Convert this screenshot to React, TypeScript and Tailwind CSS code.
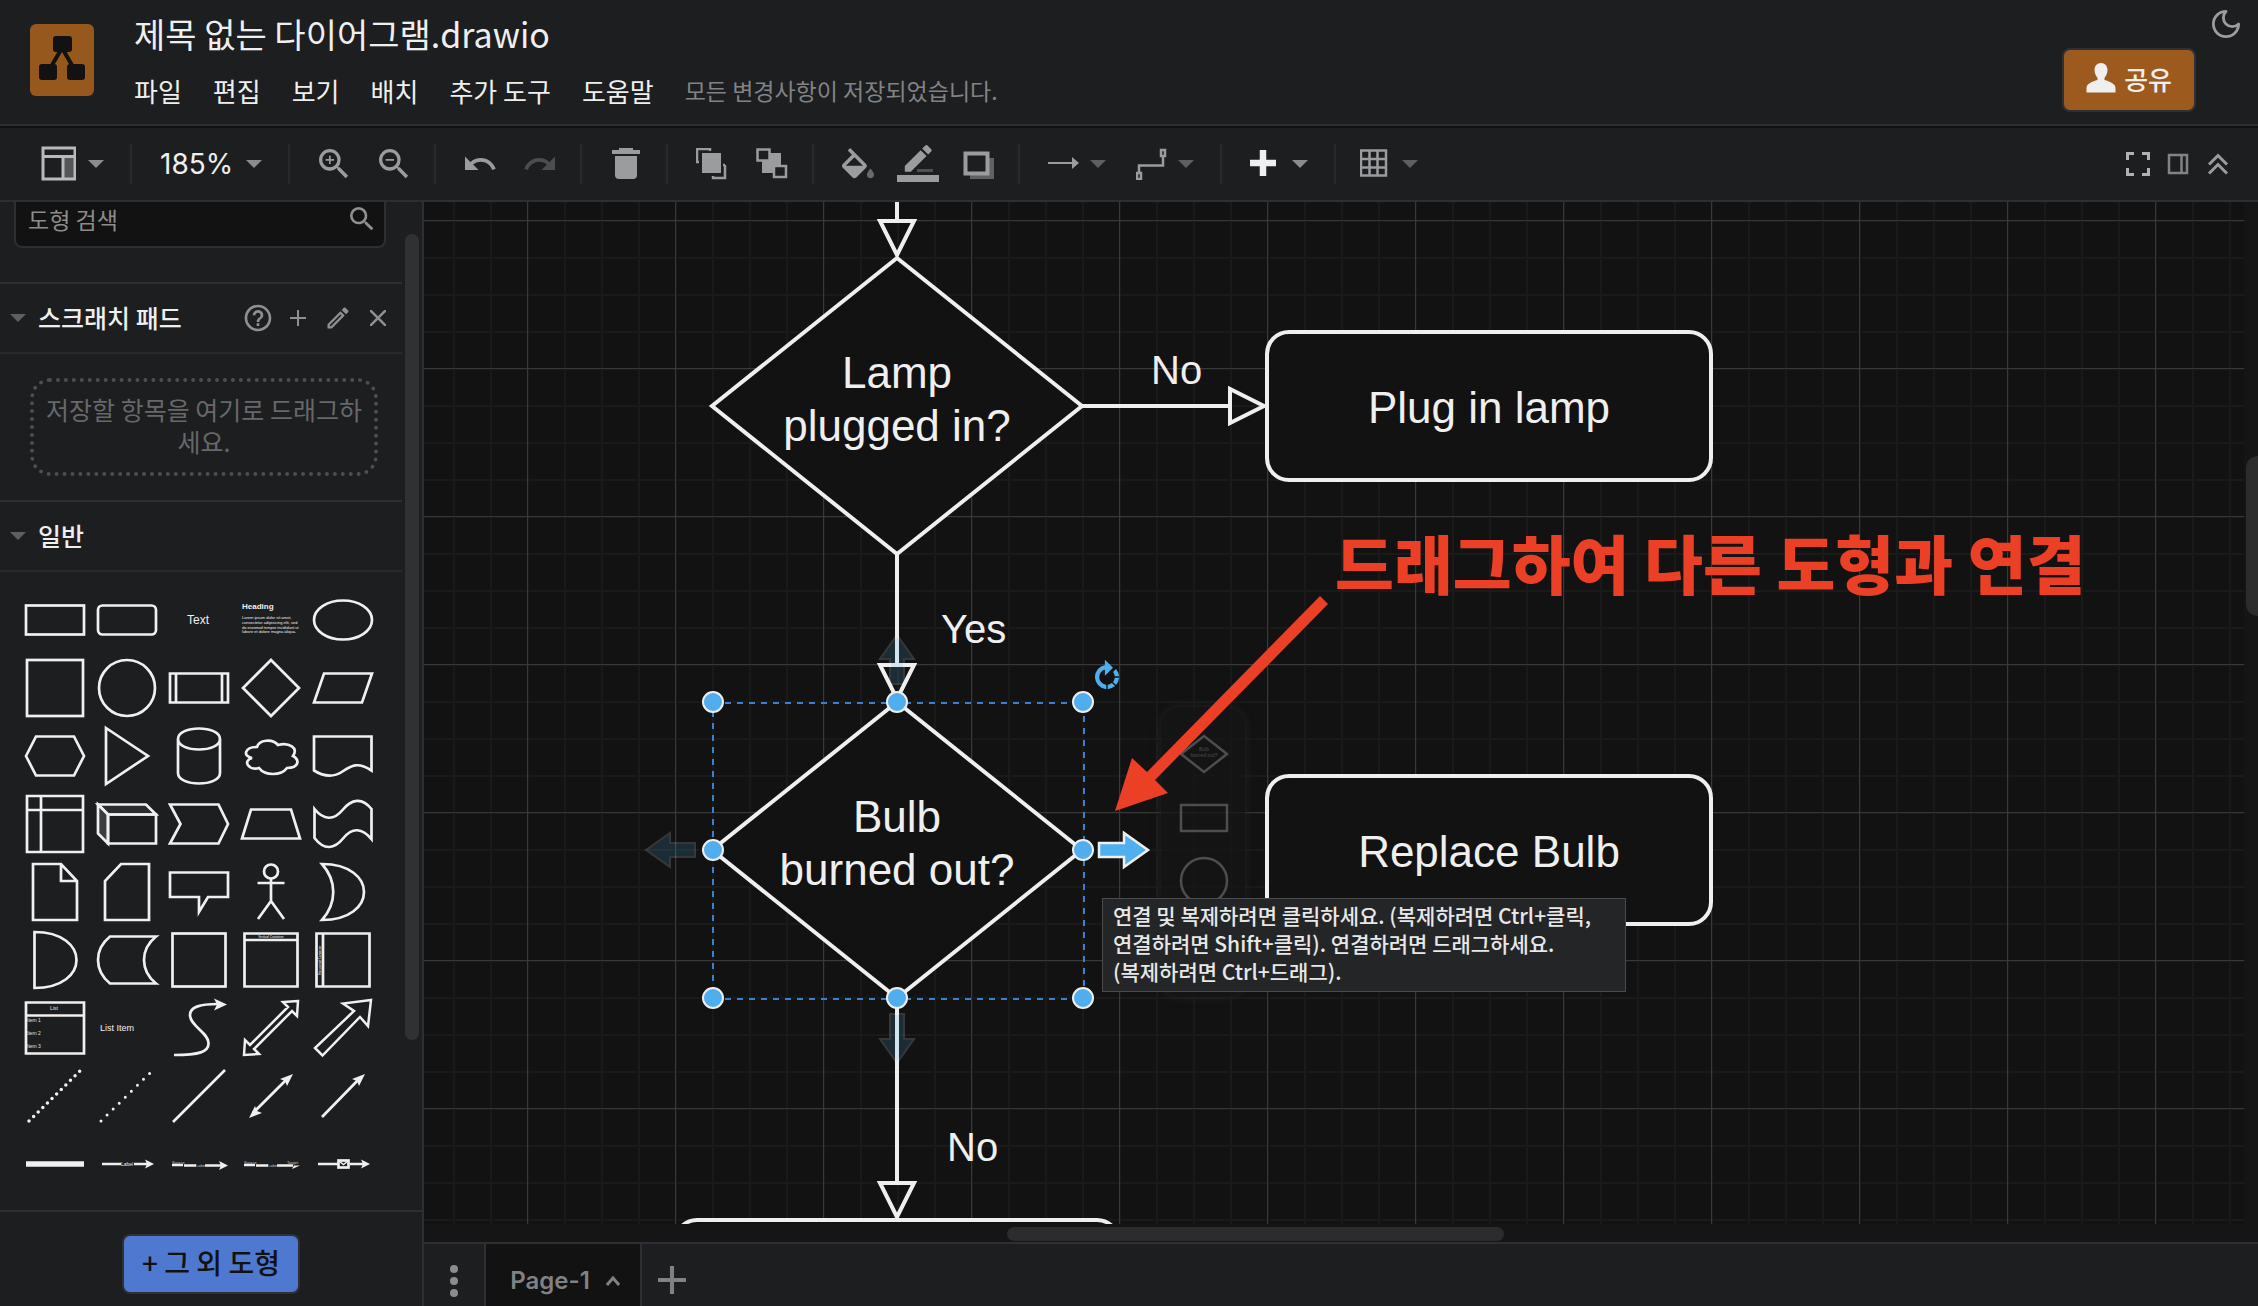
import type { ReactNode } from 'react';
import { MdHelpOutline, MdOutlineEdit, MdRedo, MdRotateRight, MdSearch, MdUndo, MdZoomIn, MdZoomOut } from 'react-icons/md';

const menus = ['파일', '편집', '보기', '배치', '추가 도구', '도움말'];

function Caret({ bright }: { bright?: boolean }) {
  return (
    <svg viewBox="0 0 16 8" className={bright ? 'w-4 h-2 shrink-0 fill-[#8c8c8c]' : 'w-4 h-2 shrink-0 fill-[#5f5f5f]'}>
      <path d="M0 0h16l-8 8z" />
    </svg>
  );
}

function Group({ children }: { children: ReactNode }) {
  return <div className="flex items-center h-10 gap-7 pl-7 pr-6 border-r-2 border-[#292a2d]">{children}</div>;
}

function MenuGroup({ children, last }: { children: ReactNode; last?: boolean }) {
  return (
    <div className={last ? 'flex items-center h-10 pl-6' : 'flex items-center h-10 gap-[30px] pl-7 pr-[26px] border-r-2 border-[#292a2d]'}>
      {children}
    </div>
  );
}

function Tool({ label, children, menu, bright }: { label: string; children: ReactNode; menu?: boolean; bright?: boolean }) {
  return (
    <button aria-label={label} className="flex items-center gap-2.5 h-8 text-[#9b9c9e]">
      <span className="flex items-center justify-center size-8">{children}</span>
      {menu && <Caret bright={bright} />}
    </button>
  );
}

function Header() {
  return (
    <header className="flex h-32 shrink-0 border-b-2 border-[#101011]">
      <div className="flex flex-1 pl-[30px] border-b-2 border-[#2e2f32]">
        <svg viewBox="0 0 64 72" className="w-16 h-[72px] mt-6 shrink-0">
          <rect width="64" height="72" rx="6" fill="#96581d" />
          <path d="M32 24 18 48M32 24l14 24" stroke="#121212" strokeWidth="4" />
          <g fill="#121212">
            <rect x="23" y="12" width="19" height="16" rx="3" />
            <rect x="9" y="40" width="18" height="16" rx="3" />
            <rect x="37" y="40" width="18" height="16" rx="3" />
          </g>
        </svg>
        <div className="pl-10 pt-3">
          <h1 className="text-[34px] leading-11">제목 없는 다이어그램.drawio</h1>
          <nav className="flex items-center gap-[31px] mt-3.5 h-10 text-[26px]">
            {menus.map((m) => <button key={m}>{m}</button>)}
            <span className="text-[23px] text-[#828385]">모든 변경사항이 저장되었습니다.</span>
          </nav>
        </div>
        <div className="flex flex-col items-end ml-auto pt-2.5">
          <button aria-label="테마" className="mr-[18px]">
            <svg viewBox="2 2 20 20" className="size-7" fill="none" stroke="#9b9c9e" strokeWidth="2" strokeLinejoin="round">
              <path d="M12 3a6 6 0 0 0 9 9 9 9 0 1 1-9-9Z" />
            </svg>
          </button>
          <button className="flex items-center gap-2 h-16 mt-2.5 mr-[62px] px-[22px] pb-1 rounded-lg border-2 border-[#2e3035] bg-[#9c5a1f] text-[26px] font-medium">
            <svg viewBox="0 0 30 30" className="size-[30px]" fill="#efefef">
              <path d="M15 0c4 0 6.500 3 6.500 7 0 3-1.500 6-3 8v2c5 1.500 11 3.500 11 8v4.500h-29V25c0-4.500 6-6.500 11-8v-2c-1.500-2-3-5-3-8 0-4 2.500-7 6.500-7z" />
            </svg>
            공유
          </button>
        </div>
      </div>
    </header>
  );
}

function Toolbar() {
  return (
    <div className="flex items-center h-[74px] shrink-0 border-b-2 border-[#2e2f33]">
      <div className="flex items-center h-10 pl-10 pr-[26px] border-r-2 border-[#292a2d]">
        <button aria-label="레이아웃" className="flex items-center gap-3">
          <svg viewBox="0 0 36 36" className="size-9" fill="none" stroke="#b9babc" strokeWidth="3">
            <path d="M23 11h12v23H23z" fill="#555658" stroke="none" />
            <path d="M3 2h32v31H3zM3 10.500h32M23 10.500V33" />
          </svg>
          <Caret bright />
        </button>
      </div>
      <div className="flex items-center h-10 pl-7 pr-[26px] border-r-2 border-[#292a2d]">
        <button className="flex items-center gap-3.5 font-['Inter'] text-[28px]">
          <span className="w-[72px]">185%</span>
          <Caret bright />
        </button>
      </div>
      <Group>
        <Tool label="확대"><MdZoomIn className="size-10 shrink-0" /></Tool>
        <Tool label="축소"><MdZoomOut className="size-10 shrink-0" /></Tool>
      </Group>
      <Group>
        <Tool label="실행 취소"><MdUndo className="size-9 shrink-0" /></Tool>
        <Tool label="다시 실행"><MdRedo className="size-9 shrink-0 text-[#4c4d4f]" /></Tool>
      </Group>
      <Group>
        <Tool label="삭제">
          <svg viewBox="0 0 32 32" className="size-8" fill="currentColor">
            <path d="M9 0h14v2h7v4H2V2h7zM5 8h22v19a4 4 0 0 1-4 4H9a4 4 0 0 1-4-4z" />
          </svg>
        </Tool>
      </Group>
      <Group>
        <Tool label="맨 앞으로">
          <svg viewBox="0 0 32 32" className="size-8" fill="none" stroke="currentColor" strokeWidth="2.500">
            <rect x="6" y="5" width="19" height="20" fill="currentColor" stroke="none" />
            <path d="M3 14H1V1h13v2M29 17v13H17v-2M29 17h-2" />
          </svg>
        </Tool>
        <Tool label="맨 뒤로">
          <svg viewBox="0 0 32 32" className="size-8" fill="none" stroke="currentColor" strokeWidth="2.500">
            <rect x="6" y="5" width="19" height="20" fill="currentColor" stroke="none" />
            <rect x="1.500" y="1.500" width="12" height="11" fill="#1d1e20" />
            <rect x="18" y="18" width="12" height="11" fill="#1d1e20" />
          </svg>
        </Tool>
      </Group>
      <Group>
        <Tool label="채우기 색">
          <svg viewBox="3 0 18 18" className="size-8" fill="currentColor">
            <path d="M16.56 8.94L7.62 0 6.21 1.41l2.38 2.38-5.150 5.150c-.59.59-.59 1.540 0 2.120l5.500 5.500c.29.29.68.44 1.060.44s.77-.15 1.060-.44l5.500-5.500c.59-.58.59-1.530 0-2.120zM5.210 10L10 5.210 14.790 10H5.210z" />
            <path d="M19 11.500s-2 2.170-2 3.500c0 1.100.9 2 2 2s2-.9 2-2c0-1.330-2-3.500-2-3.500z" opacity=".6" />
          </svg>
        </Tool>
        <Tool label="선 색">
          <svg viewBox="0 0 42 38" className="w-[42px] h-[38px] shrink-0" fill="currentColor">
            <path d="M0 30h42v7H0z" />
            <path d="M20 24h16v3H20z" opacity=".4" />
            <g transform="translate(1.500 0) scale(1.580)">
              <path d="M17.750 7L14 3.250l-10 10V17h3.750l10-10zm2.960-2.960c.39-.39.39-1.020 0-1.410L18.370.29c-.39-.39-1.020-.39-1.410 0L15 2.250 18.750 6l1.960-1.960z" />
            </g>
          </svg>
        </Tool>
        <Tool label="그림자">
          <svg viewBox="0 0 32 32" className="size-8" fill="none" stroke="currentColor">
            <path d="M8 10h24v21H8z" fill="#606163" stroke="none" />
            <rect x="3.500" y="5.500" width="22" height="20" strokeWidth="4" fill="#1d1e20" />
          </svg>
        </Tool>
      </Group>
      <MenuGroup>
        <Tool label="연결" menu>
          <svg viewBox="0 0 32 32" className="size-8" fill="currentColor">
            <path d="M0 14h24V9l7 6-7 6v-5H0z" />
          </svg>
        </Tool>
        <Tool label="웨이포인트" menu>
          <svg viewBox="0 0 32 32" className="size-8" fill="none" stroke="currentColor" strokeWidth="2.500">
            <path d="M3 25V17.500h24V8" />
            <rect x="1" y="25" width="4" height="6" />
            <rect x="25" y="2" width="4" height="6" />
          </svg>
        </Tool>
      </MenuGroup>
      <MenuGroup>
        <Tool label="삽입" menu bright>
          <svg viewBox="0 0 32 32" className="size-8" stroke="#efefef" strokeWidth="6.500">
            <path d="M0 15h26M13 2v26" />
          </svg>
        </Tool>
      </MenuGroup>
      <MenuGroup last>
        <Tool label="표" menu>
          <svg viewBox="0 0 32 32" className="size-8" fill="none" stroke="currentColor" strokeWidth="2.500">
            <path d="M1 2.500h25v25H1zM9.500 2v26M17.500 2v26M1 11h25M1 19.500h25" />
          </svg>
        </Tool>
      </MenuGroup>
      <div className="flex items-center gap-4 ml-auto pr-7 text-[#9b9c9e]">
        <button aria-label="전체 화면">
          <svg viewBox="0 0 24 24" className="size-6" fill="none" stroke="#b0b1b3" strokeWidth="3">
            <path d="M1.500 8V1.500H8M16 1.500h6.500V8M22.500 16v6.500H16M8 22.500H1.500V16" />
          </svg>
        </button>
        <button aria-label="서식">
          <svg viewBox="0 0 24 24" className="size-6" fill="none" stroke="#828385" strokeWidth="2.500">
            <path d="M3 3h18v18H3zM15.500 3v18" />
          </svg>
        </button>
        <button aria-label="접기">
          <svg viewBox="0 0 24 24" className="size-6" fill="none" stroke="currentColor" strokeWidth="3">
            <path d="m3 12.500 9-9 9 9M3 21.500l9-9 9 9" />
          </svg>
        </button>
      </div>
    </div>
  );
}

// every shape is drawn around the centre of its 72x68 cell
const shapes: { name: string; art: ReactNode }[] = [
  { name: 'Rectangle', art: <rect x="-29" y="-14.500" width="58" height="29" /> },
  { name: 'Rounded Rectangle', art: <rect x="-29" y="-14.500" width="58" height="29" rx="4.500" /> },
  { name: 'Text', art: <text x="-1" y="4" textAnchor="middle" className="text-[12px] fill-[#f0f0f0] stroke-none">Text</text> },
  {
    name: 'Heading',
    art: (
      <g className="fill-[#f0f0f0] stroke-none text-[4px]">
        <text x="-29" y="-11" className="text-[8px] font-bold">Heading</text>
        <text x="-29" y="-1">Lorem ipsum dolor sit amet,</text>
        <text x="-29" y="4">consectetur adipisicing elit, sed</text>
        <text x="-29" y="9">do eiusmod tempor incididunt ut</text>
        <text x="-29" y="13">labore et dolore magna aliqua.</text>
      </g>
    ),
  },
  { name: 'Ellipse', art: <ellipse rx="29" ry="19.500" /> },
  { name: 'Square', art: <rect x="-28" y="-28" width="56" height="56" /> },
  { name: 'Circle', art: <circle r="28" /> },
  { name: 'Process', art: <path d="M-29-14.500h58v29h-58zM-23-14.500v29M23-14.500v29" /> },
  { name: 'Diamond', art: <path d="M0-28 28 0 0 28-28 0z" /> },
  { name: 'Parallelogram', art: <path d="M-29 14.500-19-14.500h48l-10 29z" /> },
  { name: 'Hexagon', art: <path d="M-29 0l10-19.500h38L29 0 19 19.500h-38z" /> },
  { name: 'Triangle', art: <path d="M-21-28 21 0l-42 28z" /> },
  { name: 'Cylinder', art: <path d="M-21-17c0-14 42-14 42 0v34c0 14-42 14-42 0zc0 14 42 14 42 0" /> },
  { name: 'Cloud', art: <path d="M-14-9c-12 0-15 9-5 11-10 3-3 13 7 10 6 8 22 8 28 0 12 0 13-8 6-12 6-8-4-14-15-11-6-7-19-5-21 2z" /> },
  { name: 'Document', art: <path d="M-29-19.500h57.500v34c-14-9-20-5-29 1s-19 5-28.500-1z" /> },
  { name: 'Internal Storage', art: <path d="M-28-28h56v56h-56zM-14-28v56M-28-14h56" /> },
  {
    name: 'Cube',
    art: (
      <>
        <path d="M-29-19.500h48l10 10h-48z" fill="#2b2c2d" />
        <path d="M-29-19.500l10 10v29l-10-10z" fill="#3c3d3e" />
        <path d="M-19-9.500h48v29h-48z" />
      </>
    ),
  },
  { name: 'Step', art: <path d="M-29-19.500h48.500L29 0l-9.500 19.500H-29L-18.500 0z" /> },
  { name: 'Trapezoid', art: <path d="M-29 14.500l9-29h40l9 29z" /> },
  { name: 'Tape', art: <path d="M-28.500-15c9 11 19 12 28 1S19-27 28.500-15v30c-9.500-11-19-12-28-1s-19 13-29 0z" /> },
  { name: 'Note', art: <path d="M-22-28H6l16 17v39h-44zM6-28v17h16" /> },
  { name: 'Card', art: <path d="M-6-28h28v56h-44v-39z" /> },
  { name: 'Callout', art: <path d="M-29-19.500h58V5H9L0 20V5h-29z" /> },
  { name: 'Actor', art: <><circle cy="-20.500" r="7" /><path d="M0-13V9M-13.500-9h27M-13 27 0 9l13 18" /></> },
  { name: 'Or', art: <path d="M-21-28C35-28 35 28-21 28c15-17 15-39 0-56z" /> },
  { name: 'And', art: <path d="M-20.500-28c56 0 56 56 0 56z" /> },
  { name: 'Data Storage', art: <path d="M-17-23.500h46c-16 13-16 34 0 47h-46c-16-13-16-34 0-47z" /> },
  { name: 'Container', art: <rect x="-26.500" y="-26.500" width="53" height="53" /> },
  {
    name: 'Vertical Container',
    art: (
      <>
        <path d="M-26.500-26.500h53v53h-53zM-26.500-20h53" />
        <text y="-22" textAnchor="middle" className="text-[3px] font-bold fill-[#d0d0d0] stroke-none">Vertical Container</text>
      </>
    ),
  },
  {
    name: 'Horizontal Container',
    art: (
      <>
        <path d="M-26.500-26.500h53v53h-53zM-20-26.500v53" />
        <text y="-22" textAnchor="middle" transform="rotate(-90)" className="text-[3px] font-bold fill-[#d0d0d0] stroke-none">Horizontal Container</text>
      </>
    ),
  },
  {
    name: 'List',
    art: (
      <>
        <path d="M-29-25.500h58v51h-58zM-29-12.500h58" />
        <g className="fill-[#e0e0e0] stroke-none text-[5px]">
          <text x="-1" y="-18" textAnchor="middle">List</text>
          <text x="-28" y="-6">Item 1</text>
          <text x="-28" y="7">Item 2</text>
          <text x="-28" y="20">Item 3</text>
        </g>
      </>
    ),
  },
  { name: 'List Item', art: <text x="-27" y="3" className="text-[9px] fill-[#f0f0f0] stroke-none">List Item</text> },
  {
    name: 'Curve',
    art: (
      <>
        <path d="M-25 27C0 27 10 24 9.500 15 9 4-9-2-9-13c0-8 9-11 28-11" />
        <path d="M28-23.500l-13 6 3-6-3-6z" className="fill-[#f0f0f0] stroke-none" />
      </>
    ),
  },
  { name: 'Bidirectional Arrow', art: <path d="M27-27 12-26l5 5-38 38-5-5-1 15 15-1-5-5 38-38 5 5z" strokeWidth="2.500" /> },
  { name: 'Arrow', art: <path d="M28-28 0-24.500 11-17l-39 37 7.500 7.500L17-11 25-2z" strokeWidth="2.500" /> },
  { name: 'Dashed Line', art: <path d="M-26 25 25-25" strokeWidth="3.500" strokeLinecap="round" strokeDasharray="0 6.450" /> },
  { name: 'Dotted Line', art: <path d="M-26 25 23-23" strokeWidth="3" strokeLinecap="round" strokeDasharray="0 8.500" /> },
  { name: 'Line', art: <path d="M-26 26 26-26" /> },
  {
    name: 'Bidirectional Connector',
    art: (
      <>
        <path d="M-18 17 17-18" />
        <path d="M22-22 16-10l-2-5-5-2zM-22 22l6-12 2 5 5 2z" className="fill-[#f0f0f0] stroke-none" />
      </>
    ),
  },
  {
    name: 'Directional Connector',
    art: (
      <>
        <path d="M-21 21 17-18" />
        <path d="M22-22 16-10l-2-5-5-2z" className="fill-[#f0f0f0] stroke-none" />
      </>
    ),
  },
  { name: 'Link', art: <path d="M-29 0h58" strokeWidth="5.500" /> },
  {
    name: 'Connector with Label',
    art: (
      <>
        <path d="M-25 0h19M7 0h14" />
        <path d="M27 0 18 4.500 20 0l-2-4.500z" className="fill-[#f0f0f0] stroke-none" />
        <text x="0" y="2" textAnchor="middle" className="text-[5px] fill-[#f0f0f0] stroke-none">Label</text>
      </>
    ),
  },
  {
    name: 'Connector with 2 Labels',
    art: (
      <>
        <path d="M-27 1h11M-15 1.500h12M6 1.500h16" />
        <path d="M29 1.500 20 6l2-4.500L20-3z" className="fill-[#f0f0f0] stroke-none" />
        <g className="text-[4px] fill-[#c8c8c8] stroke-none"><text x="-27" y="0">Source</text><text x="-3" y="3">Label</text></g>
      </>
    ),
  },
  {
    name: 'Connector with 3 Labels',
    art: (
      <>
        <path d="M-27 1h11M-15 1.500h12M6 1.500h16" />
        <path d="M29 1.500 21 5l2-3.500z" className="fill-[#f0f0f0] stroke-none" />
        <g className="text-[4px] fill-[#c8c8c8] stroke-none"><text x="-27" y="0">Source</text><text x="-3" y="3">Label</text><text x="16" y="0">Target</text></g>
      </>
    ),
  },
  {
    name: 'Connector with Symbol',
    art: (
      <>
        <path d="M-25 0h20M7 0h14" />
        <path d="M27 0 18 4.500 20 0l-2-4.500z" className="fill-[#f0f0f0] stroke-none" />
        <rect x="-4.500" y="-3.500" width="10" height="7" />
        <path d="M-4-3 .5.500 5-3" strokeWidth="1.500" />
      </>
    ),
  },
];

function SectionTitle({ title, children }: { title: string; children?: ReactNode }) {
  return (
    <div className="flex items-center h-[70px] pl-2.5 pr-2 border-b-2 border-[#28292b]">
      <Caret />
      <h2 className="pl-3 text-[25px] font-medium">{title}</h2>
      <div className="flex items-center gap-2 ml-auto text-[#8f9092]">{children}</div>
    </div>
  );
}

function Sidebar() {
  return (
    <aside className="flex flex-col w-[424px] shrink-0 border-r-2 border-[#2e2f32]">
      <div className="flex flex-1 min-h-0 border-b-2 border-[#2e2f32]">
        <div className="w-[402px] overflow-hidden">
          <label className="flex items-center h-[46px] mx-3.5 mr-4 pl-3 pr-1.5 pb-2.5 rounded-b-lg border-2 border-t-0 border-[#2e2f32] bg-[#121212]">
            <input placeholder="도형 검색" aria-label="도형 검색" className="flex-1 min-w-0 bg-transparent text-[23px] outline-none placeholder:text-[#8c8c8c]" />
            <MdSearch className="size-8 text-[#8f9092]" />
          </label>
          <div className="mt-[34px] border-t-2 border-[#2e2f32]">
            <SectionTitle title="스크래치 패드">
              <button aria-label="도움말"><MdHelpOutline className="size-8" /></button>
              <button aria-label="추가" className="flex justify-center w-8">
                <svg viewBox="0 0 16 16" className="size-4" stroke="currentColor" strokeWidth="2"><path d="M0 8h16M8 0v16" /></svg>
              </button>
              <button aria-label="편집" className="flex justify-center w-8"><MdOutlineEdit className="size-7" /></button>
              <button aria-label="닫기" className="flex justify-center w-8">
                <svg viewBox="0 0 16 16" className="size-4" stroke="currentColor" strokeWidth="2.500"><path d="m0 0 16 16M16 0 0 16" /></svg>
              </button>
            </SectionTitle>
            <div className="px-[30px] py-6">
              <div className="flex items-center h-[98px] -mr-1.5 rounded-[20px] border-4 border-dotted border-[#4d4e50] px-2 pb-1 text-center text-[25px] leading-8 text-[#67686a] break-all">
                저장할 항목을 여기로 드래그하세요.
              </div>
            </div>
          </div>
          <div className="border-t-2 border-[#2e2f32]">
            <SectionTitle title="일반" />
            <div className="grid grid-cols-[repeat(5,72px)] pl-[19px] pt-3.5">
              {shapes.map((s) => (
                <button key={s.name} aria-label={s.name} className="h-[68px]">
                  <svg viewBox="-36 -34 72 68" className="w-[72px] h-[68px] font-['Liberation_Sans']" fill="none" stroke="#f0f0f0" strokeWidth="2.700">
                    {s.art}
                  </svg>
                </button>
              ))}
            </div>
          </div>
        </div>
        <div className="w-3.5 h-[806px] mt-8 ml-[3px] rounded-full bg-[#303133]" />
      </div>
      <div className="flex justify-center h-[94px] pt-[22px] pb-3">
        <button className="px-[18px] pb-1 rounded-lg border-2 border-[#2e3035] bg-[#4f79d0] text-[28px] font-medium text-[#121212]">+ 그 외 도형</button>
      </div>
    </aside>
  );
}

function DiagramLines() {
  return (
    <svg className="absolute inset-0 size-full" fill="none" stroke="#efefef" strokeWidth="4">
      <g fill="#121212">
        <path d="M473 56l185 148-185 148-185-148z" />
        <path d="M473 500l185 148-185 148-185-148z" />
        <rect x="843" y="130" width="444" height="148" rx="22" />
        <rect x="843" y="574" width="444" height="148" rx="22" />
        <rect x="251" y="1018" width="444" height="148" rx="22" />
      </g>
      <path d="M473 0v19M456 19h34l-17 34z" />
      <path d="M473 352v111M456 463h34l-17 34z" />
      <path d="M658 204h148M806 187v34l34-17z" />
      <path d="M473 796v185M456 981h34l-17 34z" />
    </svg>
  );
}

const handles = [
  [289, 500], [473, 500], [659, 500],
  [289, 648], [659, 648],
  [289, 796], [473, 796], [659, 796],
];

// arrow pointing right, with its tail at the origin
const ARROW = 'M1-7h25v-10l24 17-24 17V7H1z';

function Selection() {
  return (
    <svg className="absolute inset-0 size-full" fill="none">
      <g fill="#4fb0f0" stroke="#efefef" strokeWidth="2" opacity=".17">
        <path d={ARROW} transform="translate(473 483) rotate(-90)" />
        <path d={ARROW} transform="translate(473 811) rotate(90)" />
        <path d={ARROW} transform="translate(272 648) rotate(180)" />
      </g>
      <rect x="289" y="501" width="371" height="296" stroke="#3a80cf" strokeWidth="2" strokeDasharray="6 6" />
      <path d={ARROW} transform="translate(674 648)" fill="#4fb0f0" stroke="#efefef" strokeWidth="2.500" />
      {handles.map(([x, y]) => <circle key={`${x}-${y}`} cx={x} cy={y} r="10" fill="#51aeee" stroke="#efefef" strokeWidth="2" />)}
    </svg>
  );
}

function ShapePicker() {
  return (
    <div className="absolute left-[737px] top-[505px] w-[84px] h-[290px] rounded-[20px] bg-[#161616]/70 shadow-[0_0_10px_#242424]">
      <svg viewBox="0 0 84 290" className="size-full font-['Liberation_Sans']" fill="none" stroke="#4e4e4e" strokeWidth="2.500">
        <path d="M43 29l23 18-23 18-23-18z" />
        <rect x="20" y="98" width="46" height="26" />
        <circle cx="43" cy="174" r="23" />
        <g className="fill-[#4e4e4e] stroke-none text-[5px]" textAnchor="middle">
          <text x="43" y="44">Bulb</text>
          <text x="43" y="50">burned out?</text>
        </g>
      </svg>
    </div>
  );
}

function Canvas() {
  return (
    <div className="relative flex-1 overflow-hidden bg-[#121212] bg-[linear-gradient(to_right,#393939_1px,transparent_1px),linear-gradient(to_bottom,#393939_1px,transparent_1px),linear-gradient(to_right,#1a1a1a_2px,transparent_2px),linear-gradient(to_bottom,#1a1a1a_2px,transparent_2px)] bg-[length:148px_148px,148px_148px,37px_37px,37px_37px] bg-[position:103px_18px]">
      <DiagramLines />
      <div className="font-['Liberation_Sans'] text-[44px] leading-[53px] text-center text-[#efefef]">
        <div className="absolute left-[288px] top-[56px] w-[370px] h-[296px] flex items-center justify-center pb-3.5">Lamp<br />plugged in?</div>
        <div className="absolute left-[288px] top-[500px] w-[370px] h-[296px] flex items-center justify-center pb-3.5">Bulb<br />burned out?</div>
        <div className="absolute left-[843px] top-[130px] w-[444px] h-[148px] flex items-center justify-center pt-0.5">Plug in lamp</div>
        <div className="absolute left-[843px] top-[574px] w-[444px] h-[148px] flex items-center justify-center pt-0.5">Replace Bulb</div>
      </div>
      <div className="font-['Liberation_Sans'] text-[40px] leading-12 text-[#efefef]">
        <span className="absolute left-[727px] top-[144px]">No</span>
        <span className="absolute left-[517px] top-[403px]">Yes</span>
        <span className="absolute left-[523px] top-[921px]">No</span>
      </div>
      <ShapePicker />
      <Selection />
      <MdRotateRight className="absolute left-[666px] top-[458px] size-[34px] text-[#4fb0f0] [&>path:last-child]:stroke-1" />
      <svg className="absolute inset-0 size-full" fill="#eb4026">
        <path d="M691 609l17-53 15 14 173-176 8 8-173 176 13 13z" />
      </svg>
      <p className="absolute left-[911px] top-[319px] text-[64px] leading-[80px] font-black whitespace-nowrap text-[#eb4026]">드래그하여 다른 도형과 연결</p>
      <div role="tooltip" className="absolute left-[678px] top-[696px] w-[524px] h-[94px] pl-2.5 pt-0.5 border border-[#4a4b4c] bg-[#242527] text-[21px] leading-7 font-medium whitespace-nowrap text-[#e8e8e8]">
        연결 및 복제하려면 클릭하세요. (복제하려면 Ctrl+클릭,<br />
        연결하려면 Shift+클릭). 연결하려면 드래그하세요.<br />
        (복제하려면 Ctrl+드래그).
      </div>
    </div>
  );
}

function PageTabs() {
  return (
    <footer className="flex h-16 shrink-0 border-t-2 border-[#2e2f32] text-[#808183]">
      <button aria-label="페이지" className="flex flex-col items-center justify-center gap-1 w-[60px] pt-3">
        <span className="size-2 rounded-full bg-[#8c8c8c]" />
        <span className="size-2 rounded-full bg-[#8c8c8c]" />
        <span className="size-2 rounded-full bg-[#8c8c8c]" />
      </button>
      <button className="flex items-center justify-center gap-4 w-[158px] pl-1 pt-3 border-x-2 border-[#2e2f32] bg-[#121212] font-['Inter'] text-2xl font-semibold">
        Page-1
        <svg viewBox="0 0 14 10" className="w-3.5 h-2.5" fill="none" stroke="currentColor" strokeWidth="3"><path d="m1 9 6-7 6 7" /></svg>
      </button>
      <button aria-label="페이지 추가" className="pl-4 pt-2.5">
        <svg viewBox="0 0 28 28" className="size-7" stroke="currentColor" strokeWidth="4"><path d="M0 14h28M14 0v28" /></svg>
      </button>
    </footer>
  );
}

export default function App() {
  return (
    <div className="flex flex-col h-screen overflow-hidden bg-[#1d1e20] text-[#efefef] font-['Noto_Sans_CJK_KR',sans-serif]">
      <Header />
      <Toolbar />
      <div className="flex flex-1 min-h-0">
        <Sidebar />
        <main className="flex flex-col flex-1 min-w-0">
          <div className="flex flex-1 min-h-0 bg-[#151515]">
            <Canvas />
            <div className="w-3.5 shrink-0">
              <div className="h-40 ml-0.5 mt-[254px] rounded-l-full bg-[#2c2c2c]" />
            </div>
          </div>
          <div className="h-[18px] shrink-0 bg-[#151515] pt-[3px]">
            <div className="h-3.5 w-[497px] ml-[583px] rounded-full bg-[#2c2c2c]" />
          </div>
          <PageTabs />
        </main>
      </div>
    </div>
  );
}
